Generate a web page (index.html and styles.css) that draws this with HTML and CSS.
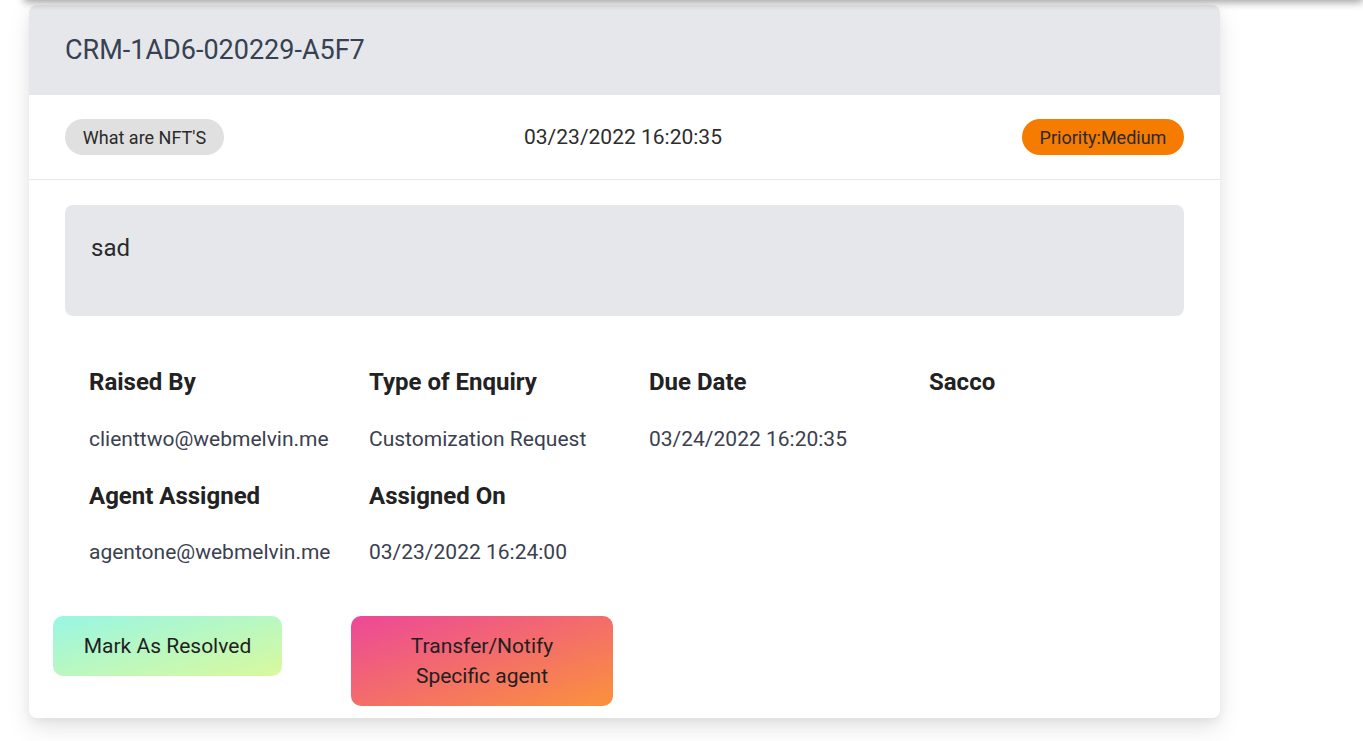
FILE: index.html
```html
<!DOCTYPE html>
<html>
<head>
<meta charset="utf-8">
<link rel="stylesheet" href="styles.css">
</head>
<body>
<div class="topbar"></div>
<div class="card">
  <div class="card-header">CRM-1AD6-020229-A5F7</div>
  <div class="meta-row">
    <span class="chip chip-gray">What are NFT'S</span>
    <span class="meta-date">03/23/2022 16:20:35</span>
    <span class="chip chip-orange">Priority:Medium</span>
  </div>
  <div class="body">
    <div class="message">sad</div>
    <div class="details">
      <div class="field"><div class="label">Raised By</div><div class="value">clienttwo@webmelvin.me</div></div>
      <div class="field"><div class="label">Type of Enquiry</div><div class="value">Customization Request</div></div>
      <div class="field"><div class="label">Due Date</div><div class="value">03/24/2022 16:20:35</div></div>
      <div class="field"><div class="label">Sacco</div><div class="value"></div></div>
      <div class="field"><div class="label">Agent Assigned</div><div class="value">agentone@webmelvin.me</div></div>
      <div class="field"><div class="label">Assigned On</div><div class="value">03/23/2022 16:24:00</div></div>
    </div>
  </div>
  <div class="actions">
    <button class="btn btn-resolve">Mark As Resolved</button>
    <button class="btn btn-transfer">Transfer/Notify Specific agent</button>
  </div>
</div>
</body>
</html>
```
FILE: styles.css
```css
html, body {
  margin: 0;
  padding: 0;
  background: #ffffff;
}
body {
  font-family: Roboto, "Liberation Sans", Arial, sans-serif;
  padding: 5px 0 0 29px;
  height: 741px;
  box-sizing: border-box;
  overflow: hidden;
  position: relative;
}
.topbar {
  position: absolute;
  top: -20px;
  left: 24px;
  right: 0;
  height: 20px;
  background: #fff;
  box-shadow: 0 2px 8px rgba(0, 0, 0, 0.4);
}
.card {
  width: 1191px;
  background: #fff;
  border-radius: 8px;
  box-shadow: 0 10px 25px rgba(0, 0, 0, 0.1), 0 4px 10px rgba(0, 0, 0, 0.05);
  overflow: hidden;
  padding-bottom: 12px;
}
.card-header {
  background: #e5e7eb;
  height: 90px;
  display: flex;
  align-items: center;
  padding-left: 36px;
  font-size: 27px;
  color: #374151;
}
.meta-row {
  height: 84px;
  border-bottom: 1px solid #e5e7eb;
  display: flex;
  align-items: center;
  justify-content: space-between;
  padding: 0 36px;
}
.chip {
  height: 36px;
  border-radius: 18px;
  display: inline-flex;
  align-items: center;
  justify-content: center;
  box-sizing: border-box;
  font-size: 18px;
  color: #2a2a2a;
}
.chip-gray {
  background: #e0e0e0;
  width: 159px;
}
.chip-orange {
  background: #f57c00;
  width: 162px;
}
.meta-date {
  font-size: 21px;
  color: #2d2d2d;
}
.body {
  padding: 25px 36px 0;
}
.message {
  background: #e5e7eb;
  border-radius: 8px;
  height: 111px;
  box-sizing: border-box;
  padding: 29px 26px 0;
  font-size: 24px;
  color: #2a2a2a;
}
.details {
  display: grid;
  grid-template-columns: repeat(4, 280px);
  padding: 50px 24px 0;
}
.field {
  height: 114px;
}
.details .field:nth-child(n+5) {
  height: 136px;
}
.label {
  font-size: 24px;
  font-weight: 700;
  color: #222;
  line-height: 32px;
}
.value {
  margin-top: 29px;
  font-size: 21px;
  color: #3a4050;
  line-height: 24px;
}
.details .field:nth-child(n+5) .value {
  margin-top: 28px;
}
.actions {
  display: flex;
  align-items: flex-start;
  padding-left: 24px;
  gap: 69px;
}
.btn {
  border: none;
  font-family: Roboto, "Liberation Sans", Arial, sans-serif;
  font-size: 21px;
  line-height: 30px;
  color: #1f1f1f;
  border-radius: 10px;
  padding: 15px 10px;
  text-align: center;
  cursor: pointer;
}
.btn-resolve {
  width: 229px;
  height: 60px;
  background: linear-gradient(to bottom right, #99f6e4, #d9f99d);
}
.btn-transfer {
  width: 262px;
  height: 90px;
  padding: 15px 40px;
  background: linear-gradient(to bottom right, #ec4899, #fb923c);
}
```
